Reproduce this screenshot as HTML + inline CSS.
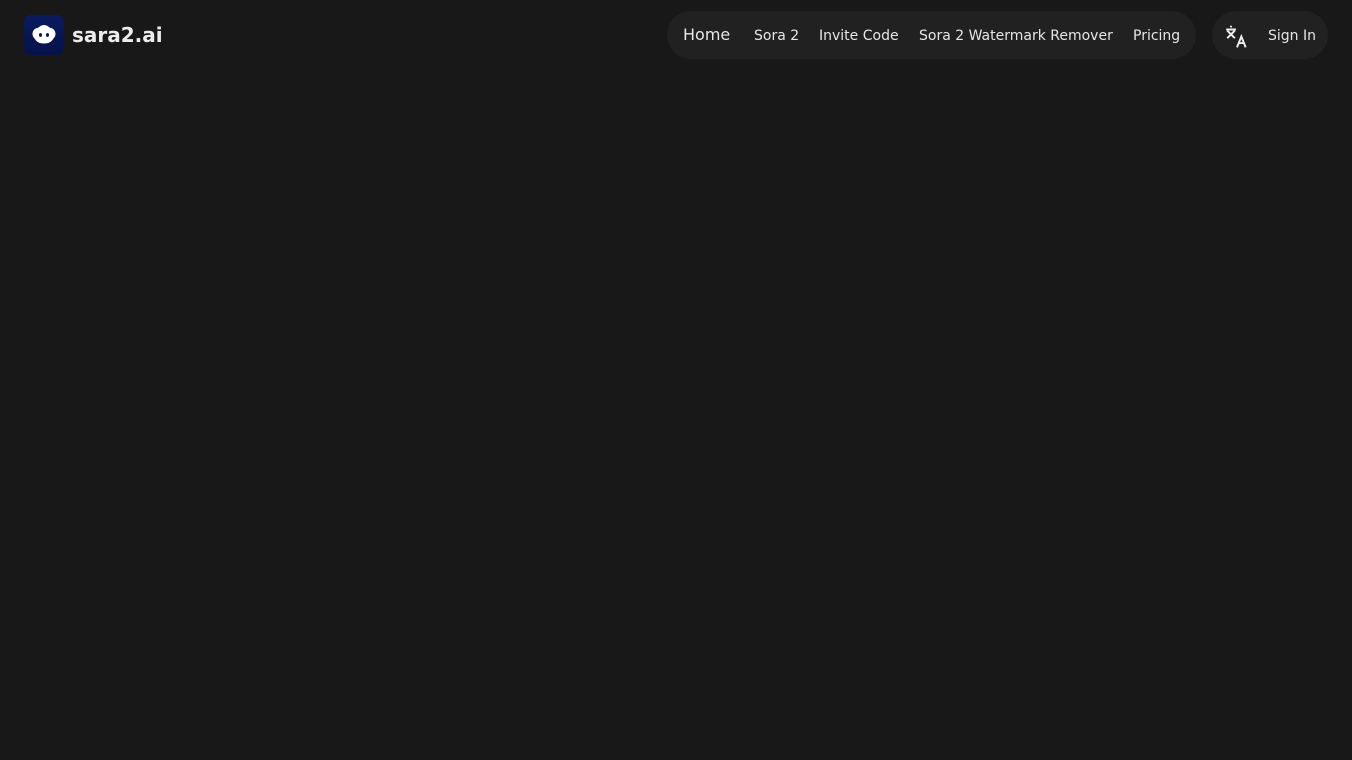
<!DOCTYPE html>
<html><head><style>
body{margin:0;width:1352px;height:760px;background:#181818;font-family:"DejaVu Sans",sans-serif;color:#e8e8e8;overflow:hidden;position:relative}
.logo{position:absolute;left:24px;top:15px;width:40px;height:40px;border-radius:7px;background:linear-gradient(180deg,#0a1a5e,#06124a)}
.brand{position:absolute;left:72px;top:23px;font-size:20px;font-weight:bold;color:#ececec}
.nav{position:absolute;left:667px;top:11px;width:529px;height:48px;border-radius:24px;background:#212121}
.nav span{position:absolute;top:17px;font-size:14px;color:#e6e6e6;white-space:nowrap}
.r{position:absolute;left:1212px;top:11px;width:116px;height:48px;border-radius:24px;background:#212121}
</style></head><body>
<div class="logo"><svg width="40" height="40" viewBox="0 0 40 40"><path d="M20 10c-3 0-4.5 2-6.5 3-2.5 0-5 2.5-5 6 0 2 1 3.5 2 4.5 1.5 2.5 4 5 9.5 5s8-2.5 9.5-5c1-1 2-2.5 2-4.5 0-3.5-2.5-6-5-6-2-1-3.5-3-6.5-3z" fill="#fff"/><ellipse cx="16.5" cy="20" rx="1.5" ry="2" fill="#0a1a5e"/><ellipse cx="23.5" cy="20" rx="1.5" ry="2" fill="#0a1a5e"/></svg></div>
<div class="brand">sara2.ai</div>
<div class="nav">
<span style="left:16px;top:14px;font-size:16px">Home</span>
<span style="left:87px">Sora 2</span>
<span style="left:152px">Invite Code</span>
<span style="left:252px">Sora 2 Watermark Remover</span>
<span style="left:466px">Pricing</span>
</div>
<div class="r">
<svg style="position:absolute;left:12px;top:12px" width="26" height="26" viewBox="0 0 24 24" fill="none" stroke="#eee" stroke-width="1.8"><path d="M2 6h9M6.5 2.5v1.5M3 7l7 7M10 7l-7 7"/><path d="M12 22.5l4-10 4 10M13.5 18.5h5"/></svg>
<span style="position:absolute;left:56px;top:17px;font-size:14px;color:#e6e6e6">Sign In</span>
</div>
</body></html>
